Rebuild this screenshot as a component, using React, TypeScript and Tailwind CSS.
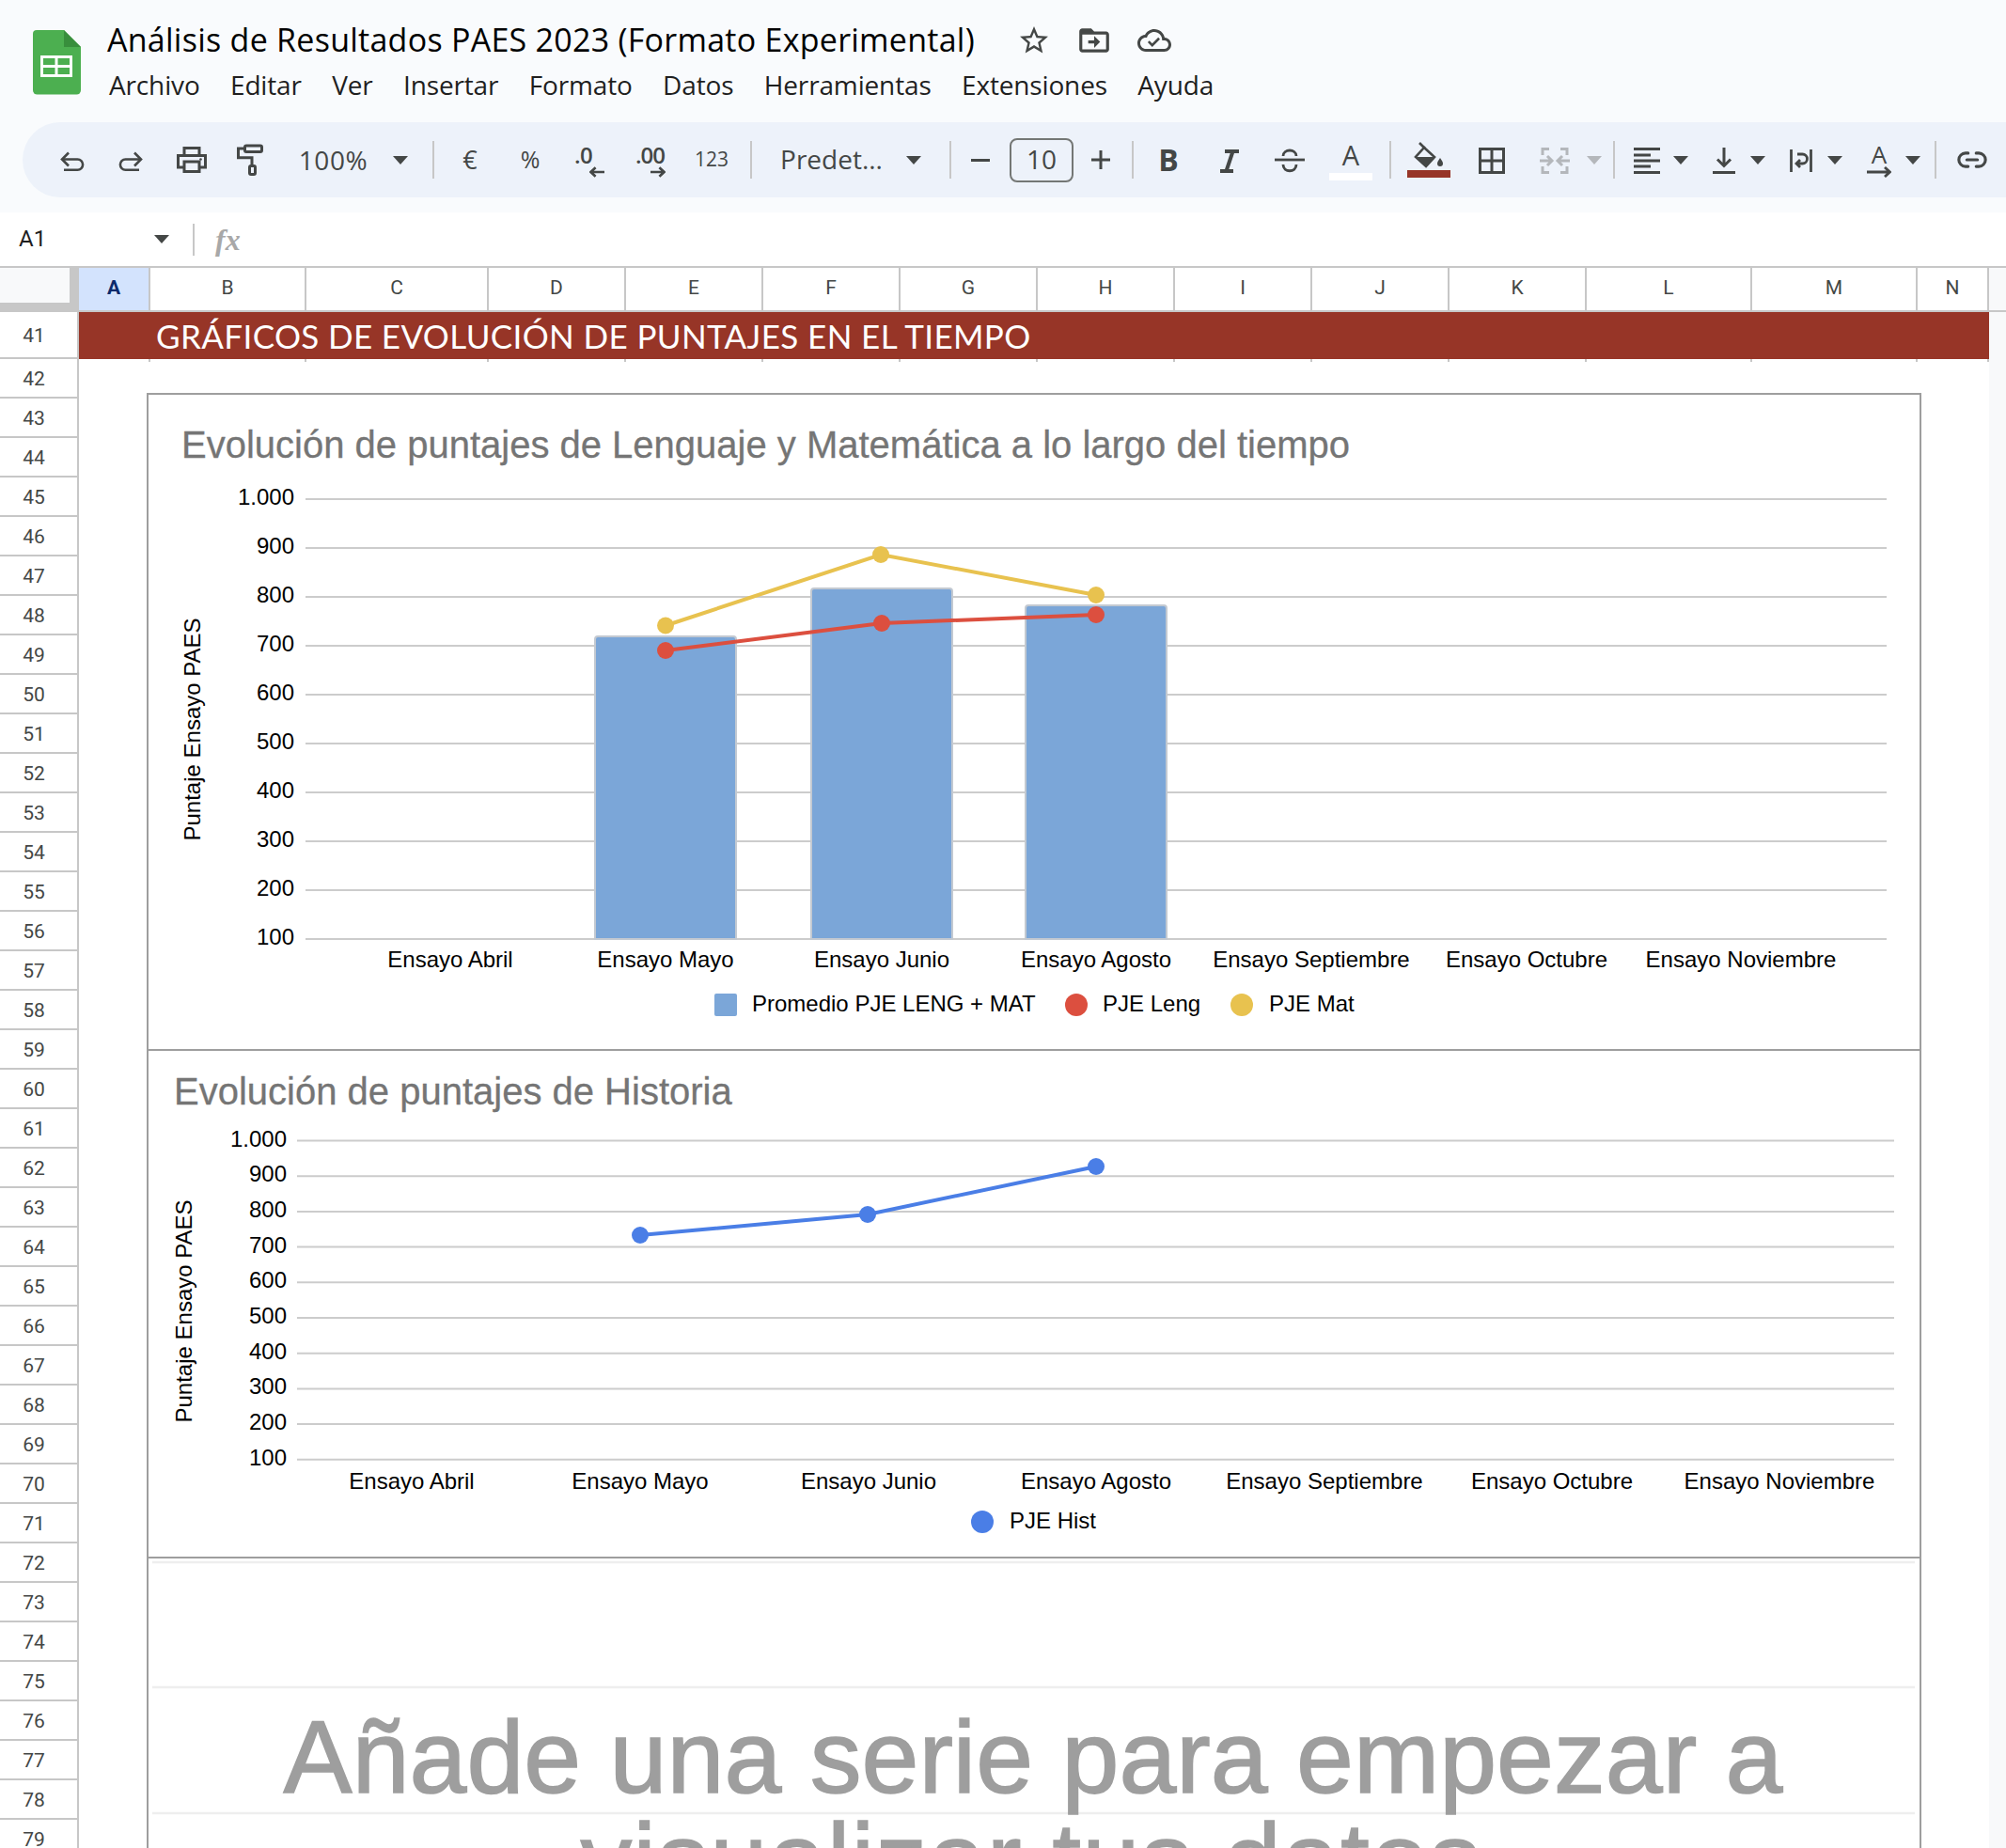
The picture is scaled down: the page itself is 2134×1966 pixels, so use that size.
import React from "react";
import { Link2 } from "lucide-react";

const cols: [string, string][] = [
  ["A", "w-[76px]"], ["B", "w-[166px]"], ["C", "w-[194px]"], ["D", "w-[146px]"], ["E", "w-[146px]"], ["F", "w-[146px]"], ["G", "w-[146px]"],
  ["H", "w-[146px]"], ["I", "w-[146px]"], ["J", "w-[146px]"], ["K", "w-[146px]"], ["L", "w-[176px]"], ["M", "w-[176px]"], ["N", "w-[76px]"],
];
const rows = Array.from({ length: 38 }, (_, i) => 42 + i);
const menu = ["Archivo", "Editar", "Ver", "Insertar", "Formato", "Datos", "Herramientas", "Extensiones", "Ayuda"];
const cats = ["Ensayo Abril", "Ensayo Mayo", "Ensayo Junio", "Ensayo Agosto", "Ensayo Septiembre", "Ensayo Octubre", "Ensayo Noviembre"];
const ticks = ["1.000", "900", "800", "700", "600", "500", "400", "300", "200", "100"];

const Slot = ({ c, children }: { c: string; children?: React.ReactNode }) => (
  <div className={`flex h-full shrink-0 items-center justify-center ${c}`}>{children}</div>
);
const Sep = () => <div className="h-[40px] w-[2px] bg-[#c7c7c7]" />;
const Caret = ({ gray }: { gray?: boolean }) => (
  <svg width="16" height="9" viewBox="0 0 16 9" className={gray ? "text-[#b4b7bb]" : "text-[#444746]"}>
    <path d="M0 0H16L8 9Z" fill="currentColor" />
  </svg>
);
const Undo = ({ flip }: { flip?: boolean }) => (
  <svg width="32" height="32" viewBox="0 0 32 32" fill="none" stroke="#444746" strokeWidth="2.6" className={`mt-[2px] ${flip ? "-scale-x-100" : ""}`}>
    <path d="M13 7.500L6 14.500L13 21.500" />
    <path d="M6 14.500H22.500a5.600 5.600 0 0 1 0 11.200H8" />
  </svg>
);
const Arrow = ({ left }: { left?: boolean }) => (
  <svg width="16" height="12" viewBox="0 0 17 12" fill="none" stroke="#444746" strokeWidth="2.8" className={left ? "-scale-x-100" : ""}>
    <path d="M0 6H15M10 1L15.500 6L10 11" />
  </svg>
);

function Toolbar() {
  const t = "font-['Open_Sans',sans-serif] text-[#444746]";
  return (
    <div className="flex h-[80px] items-center rounded-l-[40px] bg-[#edf2fa] pl-[20px] ml-[24px]">
      <Slot c="w-[64px]"><Undo /></Slot>
      <Slot c="w-[64px]"><Undo flip /></Slot>
      <Slot c="w-[64px]">
        <svg width="36" height="36" viewBox="0 0 36 36" fill="none" stroke="#444746" strokeWidth="3">
          <path d="M10 12V5.500H26V12M10 26H3.500V13.500H32.500V26H26" />
          <rect x="10" y="20" width="16" height="10.500" />
          <circle cx="27.500" cy="17.500" r="1.300" fill="#444746" stroke="none" />
        </svg>
      </Slot>
      <Slot c="w-[60px]">
        <svg width="36" height="36" viewBox="0 0 36 36" fill="none" stroke="#444746" strokeWidth="3">
          <rect x="12.500" y="3" width="18" height="6.500" rx="1.500" />
          <path d="M12 6H5.500V15.700H20V24" />
          <rect x="17.500" y="24.500" width="6" height="9" rx="1.500" />
        </svg>
      </Slot>
      <Slot c={`w-[117px] text-[28px] tracking-[0.6px] ${t}`}>100%</Slot>
      <Slot c="w-[26px]"><Caret /></Slot>
      <Slot c="w-[44px]"><Sep /></Slot>
      <Slot c={`w-[34px] text-[27px] ${t}`}>€</Slot>
      <Slot c={`w-[94px] text-[25px] ${t}`}>%</Slot>
      <Slot c="w-[32px]">
        <div className="flex w-[32px] flex-col items-start pt-[3px]">
          <span className={`h-[22px] text-[24px] leading-[22px] font-semibold tracking-[-0.5px] ${t}`}>.0</span>
          <span className="mt-[1px] ml-[16px] flex"><Arrow left /></span>
        </div>
      </Slot>
      <Slot c="w-[98px]">
        <div className="flex w-[32px] flex-col items-start pt-[3px]">
          <span className={`h-[22px] text-[24px] leading-[22px] font-semibold tracking-[-1px] ${t}`}>.00</span>
          <span className="mt-[1px] ml-[16px] flex"><Arrow /></span>
        </div>
      </Slot>
      <Slot c={`w-[32px] text-[21px] ${t}`}>123</Slot>
      <Slot c="w-[52px]"><Sep /></Slot>
      <Slot c={`w-[119px] pb-[2px] text-[28px] ${t}`}>Predet...</Slot>
      <Slot c="w-[56px]"><Caret /></Slot>
      <Slot c="w-[22px]"><Sep /></Slot>
      <Slot c="w-[42px]"><div className="h-[3px] w-[20px] bg-[#444746]" /></Slot>
      <div className={`ml-[10px] flex h-[47px] w-[68px] shrink-0 items-center justify-center rounded-[8px] border-2 border-[#747775] pb-[2px] text-[28px] ${t}`}>10</div>
      <Slot c="w-[58px]">
        <svg width="22" height="22" viewBox="0 0 22 22" stroke="#444746" strokeWidth="3"><path d="M11 1V21M1 11H21" /></svg>
      </Slot>
      <Slot c="w-[10px]"><Sep /></Slot>
      <Slot c={`w-[66px] text-[32px] font-bold leading-none ${t}`}>
        B
      </Slot>
      <Slot c="w-[64px]">
        <svg width="20" height="25" viewBox="0 0 20 25" fill="none" stroke="#444746" strokeWidth="4" className="mt-[2px]">
          <path d="M5 2H20M0 23H14M13.500 2L6.500 23" />
        </svg>
      </Slot>
      <Slot c="w-[64px]">
        <svg width="34" height="28" viewBox="0 0 34 28" fill="none" stroke="#444746" strokeWidth="2.800" className="mt-[2px]">
          <path d="M1 13H33" />
          <path d="M10 9C10 1 24 1 24 9M10 18C10 27 24 27 24 18" />
        </svg>
      </Slot>
      <Slot c="w-[66px]">
        <div className="flex flex-col items-center">
          <span className={`h-[32px] text-[29px] leading-[32px] ${t}`}>A</span>
          <div className="mt-[3px] h-[8px] w-[46px] bg-white" />
        </div>
      </Slot>
      <Slot c="w-[18px]"><Sep /></Slot>
      <Slot c="w-[64px]">
        <div className="flex flex-col items-center">
          <svg width="34" height="29" viewBox="0 0 34 29">
            <path d="M7 1L13 7" stroke="#444746" strokeWidth="2.600" fill="none" />
            <path d="M12 6L23 16L14 26L3 16Z" fill="none" stroke="#444746" strokeWidth="2.600" />
            <path d="M3 16H23L14 26Z" fill="#444746" />
            <path d="M29 17C31 20 32 21 32 23A3 3 0 0 1 26 23C26 21 27 20 29 17Z" fill="#444746" />
          </svg>
          <div className="mt-[1px] h-[8px] w-[46px] bg-[#973527]" />
        </div>
      </Slot>
      <Slot c="w-[70px]">
        <svg width="28" height="28" viewBox="0 0 28 28" fill="none" stroke="#444746" strokeWidth="3" className="mt-[2px]"><path d="M1.500 1.500H26.500V26.500H1.500ZM14 1.500V26.500M1.500 14H26.500" /></svg>
      </Slot>
      <Slot c="w-[64px]">
        <svg width="32" height="28" viewBox="0 0 32 28" fill="none" stroke="#b4b7bb" strokeWidth="3" className="mt-[2px]">
          <path d="M10 1.500H3V8M3 20V26.500H10M22 1.500H29V8M29 20V26.500H22" />
          <path d="M0 14H12M8 9L13 14L8 19M32 14H20M24 9L19 14L24 19" />
        </svg>
      </Slot>
      <Slot c="w-[20px]"><Caret gray /></Slot>
      <Slot c="w-[26px]"><div className="mr-[4px]"><Sep /></div></Slot>
      <Slot c="w-[40px]">
        <svg width="28" height="28" viewBox="0 0 28 28" stroke="#444746" strokeWidth="3" className="mt-[2px]"><path d="M0 1.500H28M0 8H18M0 14H28M0 20H18M0 26.500H28" /></svg>
      </Slot>
      <Slot c="w-[32px]"><Caret /></Slot>
      <Slot c="ml-[10px] w-[40px]">
        <svg width="24" height="28" viewBox="0 0 24 28" fill="none" stroke="#444746" strokeWidth="3" className="mt-[2px]">
          <path d="M12 0V19M5 12.500L12 19.500L19 12.500M0 26.500H24" />
        </svg>
      </Slot>
      <Slot c="w-[32px]"><Caret /></Slot>
      <Slot c="ml-[10px] w-[40px]">
        <svg width="24" height="24" viewBox="0 0 24 24" fill="none" stroke="#444746" strokeWidth="2.800" className="mt-[2px]">
          <path d="M1.500 0V24M22.500 0V24M8 5H13.500a4.500 4.500 0 0 1 0 10H7M11 11L7 15L11 19" />
        </svg>
      </Slot>
      <Slot c="w-[32px]"><Caret /></Slot>
      <Slot c="ml-[11px] w-[40px]">
        <div className="flex w-[26px] flex-col items-center pt-[2px]">
          <span className={`h-[22px] text-[26px] leading-[22px] ${t}`}>A</span>
          <svg width="26" height="12" viewBox="0 0 26 12" className="mt-[2px]" fill="none" stroke="#444746" strokeWidth="2.800"><path d="M0 6H24M19 1L24.500 6L19 11" /></svg>
        </div>
      </Slot>
      <Slot c="w-[32px]"><Caret /></Slot>
      <Slot c="w-[16px]"><Sep /></Slot>
      <Slot c="w-[62px]"><Link2 size={34} color="#444746" strokeWidth={2.2} /></Slot>
    </div>
  );
}

function Header() {
  return (
    <div className="h-[226px] bg-[#f9fbfd] text-[#1f1f1f] font-['Open_Sans',sans-serif]">
      <div className="flex h-[130px]">
        <div className="ml-[35px] mt-[32px] shrink-0">
          <svg width="51" height="69" viewBox="0 0 51 69">
            <path d="M4 0H33L51 18V64a4.500 4.500 0 0 1-4.500 4.500H4.500A4.500 4.500 0 0 1 0 64V4A4 4 0 0 1 4 0Z" fill="#4caf50" />
            <path d="M33 0L51 18H33Z" fill="#388e3c" />
            <path d="M8 27H42V50H8Z" fill="#fff" />
            <path d="M11 30H23.500V37H11ZM26.500 30H39V37H26.500ZM11 40H23.500V47H11ZM26.500 40H39V47H26.500Z" fill="#4caf50" />
          </svg>
        </div>
        <div className="ml-[28px] flex flex-col">
          <div className="flex h-[42px] mt-[21px] items-center">
            <span className="text-[34px] tracking-[0.26px] whitespace-nowrap text-black">Análisis de Resultados PAES 2023 (Formato Experimental)</span>
            <div className="ml-[45px] flex items-center gap-[27px] pt-[2px]">
              <svg width="36" height="36" viewBox="0 0 24 24" fill="#444746"><path d="M22 9.240l-7.190-.62L12 2 9.190 8.630 2 9.240l5.460 4.730L5.820 21 12 17.270 18.180 21l-1.630-7.030L22 9.240zM12 15.400l-3.760 2.270 1-4.280-3.320-2.880 4.380-.38L12 6.100l1.710 4.040 4.380.38-3.320 2.880 1 4.280L12 15.400z" /></svg>
              <svg width="38" height="38" viewBox="0 0 24 24" fill="#444746"><path d="M20 6h-8l-2-2H4c-1.100 0-1.990.9-1.990 2L2 18c0 1.100.9 2 2 2h16c1.100 0 2-.9 2-2V8c0-1.100-.9-2-2-2zm0 12H4V8h16v10zm-8-1l4-4-4-4v3H8v2h4v3z" /></svg>
              <svg width="36" height="36" viewBox="0 0 24 24" fill="#444746"><path d="M19.350 10.040C18.670 6.590 15.640 4 12 4 9.110 4 6.600 5.640 5.350 8.040 2.340 8.360 0 10.910 0 14c0 3.310 2.690 6 6 6h13c2.760 0 5-2.240 5-5 0-2.640-2.050-4.780-4.650-4.960zM19 18H6c-2.210 0-4-1.790-4-4s1.790-4 4-4h.71C7.370 7.690 9.480 6 12 6c3.040 0 5.500 2.460 5.500 5.500v.5H19c1.660 0 3 1.340 3 3s-1.340 3-3 3z" /><path d="M10.500 14.200l-2-2-1.200 1.200 3.200 3.200 5.500-5.500-1.200-1.200z" /></svg>
            </div>
          </div>
          <div className="mt-[7px] ml-[2px] flex gap-[32.4px] text-[28px] leading-[40px] tracking-[-0.15px]">
            {menu.map((m) => <span key={m} className="whitespace-nowrap">{m}</span>)}
          </div>
        </div>
      </div>
      <Toolbar />
    </div>
  );
}

function FormulaBar() {
  return (
    <div className="flex h-[57px] items-center bg-white">
      <span className="ml-[20px] w-[144px] pb-[2px] text-[24px] text-[#1f1f1f] font-['Roboto',sans-serif]">A1</span>
      <Caret />
      <div className="ml-[25px] h-[34px] w-[2px] bg-[#c7c7c7]" />
      <span className="ml-[22px] text-[32px] italic font-['Liberation_Serif',serif] font-bold text-[#a8a8a8]">fx</span>
    </div>
  );
}

function ColumnHeader() {
  return (
    <div className="flex h-[49px] border-y-2 border-[#c7c7c7] bg-white font-['Roboto',sans-serif] text-[21px] text-[#444746]">
      <div className="w-[84px] shrink-0 bg-[#c7c7c7]">
        <div className="h-[37px] w-[74px] bg-[#f8f9fa]" />
      </div>
      {cols.map(([c, w]) => (
        <div key={c} className={`flex shrink-0 items-center justify-center border-r-2 border-[#c7c7c7] pb-[2px] ${w} ${c === "A" ? "bg-[#d3e3fd] font-bold text-[#0b2a6b]" : ""}`}>{c}</div>
      ))}
      <div className="flex-1 bg-[#f8f9fa]" />
    </div>
  );
}

function RowHeader() {
  return (
    <div className="w-[84px] shrink-0 border-r-2 border-[#c7c7c7] bg-white font-['Roboto',sans-serif] text-[21px] text-[#444746]">
      <div className="flex h-[50px] items-center justify-center border-b-2 border-[#c7c7c7] pt-[3px] pr-[10px]">41</div>
      {rows.map((r) => (
        <div key={r} className="flex h-[42px] items-center justify-center border-b-2 border-[#c7c7c7] pt-[3px] pr-[10px]">{r}</div>
      ))}
    </div>
  );
}

function Grid({ ys, x1, x2, lx }: { ys: number[]; x1: number; x2: number; lx: number }) {
  return (
    <>
      {ys.map((y, i) => (
        <g key={y}>
          <line x1={x1} x2={x2} y1={y} y2={y} stroke="#cccccc" strokeWidth="2" />
          <text x={lx} y={y + 6} textAnchor="end" fontSize="24" fill="#000">{ticks[i]}</text>
        </g>
      ))}
    </>
  );
}

function Chart1() {
  const ys = ticks.map((_, i) => 531 + i * 52);
  const cx = [479, 708, 938, 1166, 1395, 1624, 1852];
  const bars = [[633, 677], [863, 626], [1091, 644]];
  const mat = [[708, 665.5], [937, 590], [1166, 633]];
  const len = [[708, 692], [938, 663], [1166, 654]];
  return (
    <svg width="1884" height="696" viewBox="158 420 1884 696" className="block font-['Liberation_Sans',sans-serif]">
      <text x="193" y="487" fontSize="40" fill="#757575" stroke="#757575" strokeWidth="0.3">Evolución de puntajes de Lenguaje y Matemática a lo largo del tiempo</text>
      <Grid ys={ys} x1={325} x2={2007} lx={313} />
      {bars.map(([x, y]) => (
        <path key={x} d={`M${x} 999V${y + 3}a3 3 0 0 1 3-3H${x + 147}a3 3 0 0 1 3 3V999Z`} fill="#7ba6d8" stroke="#c3c9d1" strokeWidth="2" />
      ))}
      <polyline points={mat.join(" ")} fill="none" stroke="#e8c24f" strokeWidth="4" />
      <polyline points={len.join(" ")} fill="none" stroke="#dc4f3f" strokeWidth="4" />
      {mat.map(([x, y]) => <circle key={x} cx={x} cy={y} r="9" fill="#e8c24f" />)}
      {len.map(([x, y]) => <circle key={x} cx={x} cy={y} r="9" fill="#dc4f3f" />)}
      <text transform="translate(213 776) rotate(-90)" textAnchor="middle" fontSize="24" fill="#000">Puntaje Ensayo PAES</text>
      {cats.map((c, i) => <text key={c} x={cx[i]} y="1029" textAnchor="middle" fontSize="24" fill="#000">{c}</text>)}
      <rect x="760" y="1057" width="24" height="24" rx="2" fill="#7ba6d8" />
      <text x="800" y="1076" fontSize="24" fill="#000">Promedio PJE LENG + MAT</text>
      <circle cx="1145" cy="1069" r="12" fill="#dc4f3f" />
      <text x="1173" y="1076" fontSize="24" fill="#000">PJE Leng</text>
      <circle cx="1321" cy="1069" r="12" fill="#e8c24f" />
      <text x="1350" y="1076" fontSize="24" fill="#000">PJE Mat</text>
    </svg>
  );
}

function Chart2() {
  const ys = ticks.map((_, i) => 1213.5 + i * 37.7);
  const cx = [438, 681, 924, 1166, 1409, 1651, 1893];
  const pts = [[681, 1314], [923, 1292], [1166, 1241]];
  return (
    <svg width="1884" height="538" viewBox="158 1118 1884 538" className="block font-['Liberation_Sans',sans-serif]">
      <text x="185" y="1175" fontSize="40" fill="#757575" stroke="#757575" strokeWidth="0.3">Evolución de puntajes de Historia</text>
      <Grid ys={ys} x1={316} x2={2015} lx={305} />
      <polyline points={pts.join(" ")} fill="none" stroke="#4a7ee6" strokeWidth="4" />
      {pts.map(([x, y]) => <circle key={x} cx={x} cy={y} r="9" fill="#4a7ee6" />)}
      <text transform="translate(204 1395) rotate(-90)" textAnchor="middle" fontSize="24" fill="#000">Puntaje Ensayo PAES</text>
      {cats.map((c, i) => <text key={c} x={cx[i]} y="1584" textAnchor="middle" fontSize="24" fill="#000">{c}</text>)}
      <circle cx="1045" cy="1619" r="12" fill="#4a7ee6" />
      <text x="1074" y="1626" fontSize="24" fill="#000">PJE Hist</text>
    </svg>
  );
}

function Chart3() {
  return (
    <svg width="1884" height="320" viewBox="158 1658 1884 320" className="block font-['Liberation_Sans',sans-serif]">
      {[1662, 1795, 1929].map((y) => <line key={y} x1="162" x2="2037" y1={y} y2={y} stroke="#eeeeee" strokeWidth="2.500" />)}
      <text x="1099" y="1907" textAnchor="middle" fontSize="109.500" fill="#9e9e9e" stroke="#9e9e9e" strokeWidth="1.500">Añade una serie para empezar a</text>
      <text x="1097" y="2016" textAnchor="middle" fontSize="109.500" letterSpacing="1.400" fill="#9e9e9e" stroke="#9e9e9e" strokeWidth="1.500">visualizar tus datos</text>
    </svg>
  );
}

function Sheet() {
  return (
    <div className="relative flex-1 overflow-hidden bg-white">
      <div className="flex h-[50px] w-[2032px] items-center bg-[#973527] pl-[82px] font-['Lato',sans-serif] text-[35px] tracking-[0.37px] text-white">
        GRÁFICOS DE EVOLUCIÓN DE PUNTAJES EN EL TIEMPO
      </div>
      <div className="flex h-[3px] w-[2032px]">
        {cols.map(([c, w]) => <div key={c} className={`h-full shrink-0 border-r-2 border-[#c7c7c7] ${w}`} />)}
      </div>
      <div className="absolute top-[86px] left-[72px] w-[1888px] border-2 border-[#9e9e9e] bg-white">
        <Chart1 />
        <div className="h-[2px] bg-[#9e9e9e]" />
        <Chart2 />
        <div className="h-[2px] bg-[#9e9e9e]" />
        <Chart3 />
      </div>
      <div className="absolute top-0 right-0 h-full w-[18px] bg-[#f8f9fa]" />
    </div>
  );
}

export default function App() {
  return (
    <div className="h-[1966px] w-[2134px] overflow-hidden bg-white">
      <Header />
      <FormulaBar />
      <ColumnHeader />
      <div className="flex">
        <RowHeader />
        <Sheet />
      </div>
    </div>
  );
}
